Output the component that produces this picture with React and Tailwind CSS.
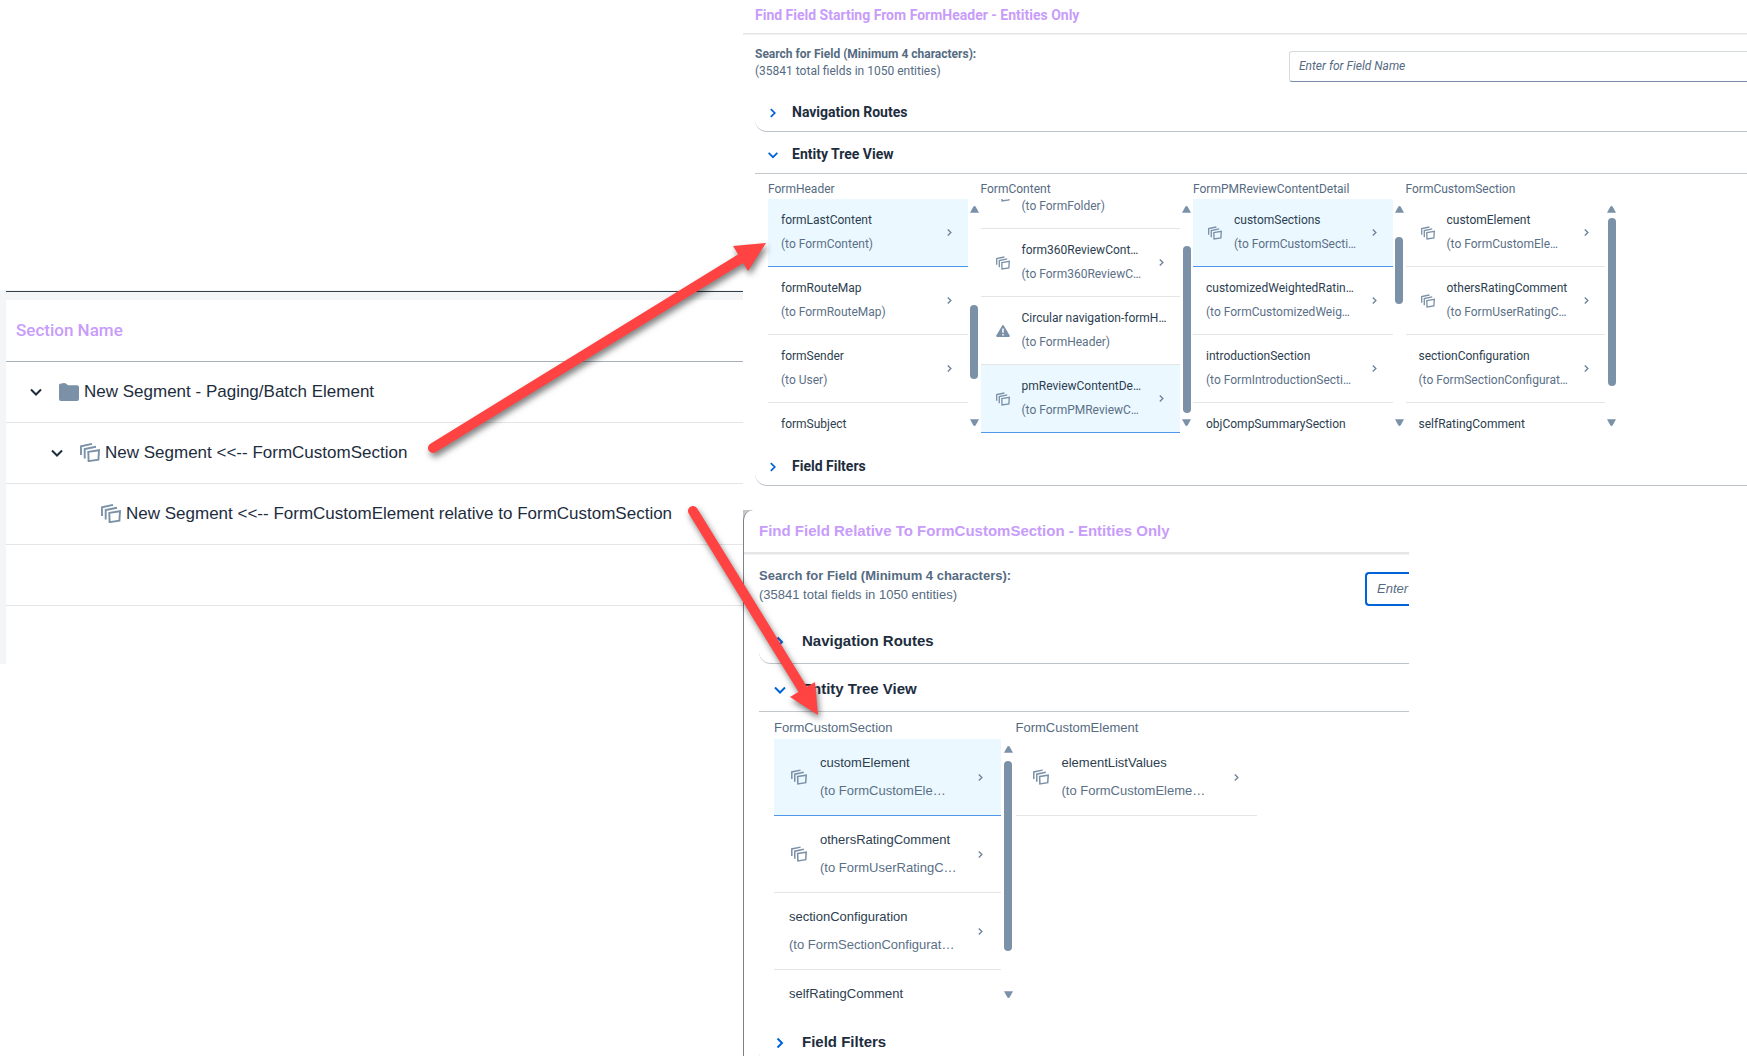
import React from "react";
import clsx from "clsx";

const segments = [
  { name: "New Segment - Paging/Batch Element", icon: "folder", level: 0, open: true },
  { name: "New Segment <<-- FormCustomSection", icon: "entity", level: 1, open: true },
  { name: "New Segment <<-- FormCustomElement relative to FormCustomSection", icon: "entity", level: 2 },
];

const levelPadding = ["pl-[22px]", "pl-[43px]", "pl-[95px]"];

const headerColumns = [
  {
    title: "FormHeader",
    thumb: { top: 106, height: 74 },
    items: [
      { name: "formLastContent", target: "(to FormContent)", selected: true, arrow: true },
      { name: "formRouteMap", target: "(to FormRouteMap)", arrow: true },
      { name: "formSender", target: "(to User)", arrow: true },
      { name: "formSubject", target: "" },
    ],
  },
  {
    title: "FormContent",
    scrolled: true,
    thumb: { top: 47, height: 167 },
    items: [
      { name: "", target: "(to FormFolder)", icon: "entity" },
      { name: "form360ReviewCont…", target: "(to Form360ReviewC…", icon: "entity", arrow: true },
      { name: "Circular navigation-formH…", target: "(to FormHeader)", icon: "warning" },
      { name: "pmReviewContentDe…", target: "(to FormPMReviewC…", icon: "entity", selected: true, arrow: true },
    ],
  },
  {
    title: "FormPMReviewContentDetail",
    thumb: { top: 38, height: 67 },
    items: [
      { name: "customSections", target: "(to FormCustomSecti…", icon: "entity", selected: true, arrow: true },
      { name: "customizedWeightedRatin…", target: "(to FormCustomizedWeig…", arrow: true },
      { name: "introductionSection", target: "(to FormIntroductionSecti…", arrow: true },
      { name: "objCompSummarySection", target: "" },
    ],
  },
  {
    title: "FormCustomSection",
    thumb: { top: 19, height: 168 },
    items: [
      { name: "customElement", target: "(to FormCustomEle…", icon: "entity", arrow: true },
      { name: "othersRatingComment", target: "(to FormUserRatingC…", icon: "entity", arrow: true },
      { name: "sectionConfiguration", target: "(to FormSectionConfigurat…", arrow: true },
      { name: "selfRatingComment", target: "" },
    ],
  },
];

const relativeColumns = [
  {
    title: "FormCustomSection",
    thumb: { top: 22, height: 190 },
    items: [
      { name: "customElement", target: "(to FormCustomEle…", icon: "entity", selected: true, arrow: true },
      { name: "othersRatingComment", target: "(to FormUserRatingC…", icon: "entity", arrow: true },
      { name: "sectionConfiguration", target: "(to FormSectionConfigurat…", arrow: true },
      { name: "selfRatingComment", target: "" },
    ],
  },
  {
    title: "FormCustomElement",
    items: [
      { name: "elementListValues", target: "(to FormCustomEleme…", icon: "entity", arrow: true },
    ],
  },
];

// the two dialogs share one layout at two zoom levels
const sizes = {
  small: {
    title: "h-[34px] pl-3 pb-[2px] text-[14px] border-b",
    search: "h-[56px] pl-3",
    label: "w-[534px] pt-3 text-[12px] leading-[17px]",
    input: "mt-[17px] h-[31px] pl-[9px] pb-[2px] text-[12px] rounded-l-[3px] border-[#d5dadd] border-b-[#758ca4]",
    body: "pl-3",
    header: "h-[42px] pl-[11px] gap-3 text-[14px]",
    headerIcon: "size-[14px]",
    columns: "w-[863px] grid-cols-4 pl-[13px]",
    columnTitle: "h-[25px] pt-[6px] text-[12px]",
    list: "h-[234px]",
    scrolled: "-mt-[38px]",
    item: "h-[68px] pl-[13px] pr-[13px]",
    iconBox: "w-7",
    icon: "size-[14px]",
    line: "h-6 leading-[22px] text-[12px]",
    scrollbar: "w-[13px]",
    filters: "mt-[11px]",
  },
  large: {
    title: "h-[44px] pl-[15px] text-[15px] border-b-2",
    search: "h-[62px] pl-[15px]",
    label: "w-[606px] pt-3 text-[13px] leading-[19px]",
    input: "mt-[18px] h-[34px] pl-[10px] pb-[2px] text-[13px] rounded-l-[4px] border-2 border-[#0064d9]",
    body: "pl-[15px]",
    header: "h-[48px] pl-[13px] gap-[14px] text-[15px]",
    headerIcon: "size-4",
    columns: "w-[498px] grid-cols-2 pl-[15px]",
    columnTitle: "h-[27px] pt-[6px] text-[13px]",
    list: "h-[266px]",
    scrolled: "",
    item: "h-[77px] pl-[15px] pr-[15px]",
    iconBox: "w-[31px]",
    icon: "size-4",
    line: "h-7 leading-7 text-[13px]",
    scrollbar: "w-[15px]",
    filters: "mt-3",
  },
};

function EntityIcon({ className }) {
  return (
    <svg viewBox="0 0 20 19" fill="none" stroke="#7b91a8" strokeWidth="1.9" className={className}>
      <path d="M1 12V3.2L12 .9" />
      <path d="M4.7 15.5V6L16 3.7" />
      <path d="M8.3 8.9 19 7.2 18.4 16.6 8.6 18.1Z" />
    </svg>
  );
}

function FolderIcon({ className }) {
  return (
    <svg viewBox="0 0 20 18" fill="#7b91a8" className={className}>
      <path d="M0 2Q0 1 1 .8L5 0Q6.500 0 7.500 1L9 2.200H18Q20 2.200 20 4V16Q20 18 18 18H2Q0 18 0 16Z" />
    </svg>
  );
}

function WarningIcon({ className }) {
  return (
    <svg viewBox="0 0 14 14" className={className}>
      <path d="M6.200 1.500Q7 .3 7.800 1.500L13.700 11.500Q14 13 12.800 13H1.200Q0 13 .3 11.500Z" fill="#7b91a8" />
      <path d="M7 4.500V8.700M7 9.900V11.400" stroke="#fff" strokeWidth="1.500" />
    </svg>
  );
}

function Chevron({ open, className }) {
  return (
    <svg viewBox="0 0 16 16" fill="none" stroke="currentColor" strokeWidth="2" className={className}>
      <path d={open ? "M3 5.500 8 10.500 13 5.500" : "M5.500 3.500 10 8 5.500 12.500"} />
    </svg>
  );
}

function Triangle({ down }) {
  return (
    <svg viewBox="0 0 9 7" fill="#7b91a8" className="w-[9px] h-[7px]">
      <path d={down ? "M0 .3H9L5.700 6.300Q4.500 7.500 3.300 6.300Z" : "M0 6.700H9L5.700 .7Q4.500-.5 3.300 .7Z"} />
    </svg>
  );
}

function TreeItem({ item, size }) {
  return (
    <li>
      <button
        className={clsx(
          "w-full flex items-center text-left border-b",
          size.item,
          item.selected ? "bg-[#ebf8ff] border-[#4f97e8]" : "border-[#e5e5e5]"
        )}
      >
        {item.icon && (
          <span className={clsx("shrink-0 pl-[2px]", size.iconBox)}>
            {item.icon === "warning" ? (
              <WarningIcon className={size.icon} />
            ) : (
              <EntityIcon className={size.icon} />
            )}
          </span>
        )}
        <span className="flex-1 min-w-0 whitespace-nowrap">
          <span className={clsx("block text-[#2c3e50]", size.line)}>{item.name}</span>
          <span className={clsx("block text-[#5b7087]", size.line)}>{item.target}</span>
        </span>
        {item.arrow && <Chevron className="size-[11px] shrink-0 text-[#6f859c]" />}
      </button>
    </li>
  );
}

function TreeColumn({ column, size }) {
  return (
    <div>
      <h3 className={clsx("text-[#556b82]", size.columnTitle)}>{column.title}</h3>
      <div className={clsx("flex overflow-hidden", size.list)}>
        <ul className={clsx("flex-1 min-w-0", column.scrolled && size.scrolled)}>
          {column.items.map((item) => (
            <TreeItem key={item.target + item.name} item={item} size={size} />
          ))}
        </ul>
        {column.thumb && (
          <div className={clsx("relative flex flex-col items-center justify-between py-[7px]", size.scrollbar)}>
            <Triangle />
            <span
              className="absolute inset-x-0 mx-auto w-2 rounded-full bg-[#7b91a8]"
              style={{ top: column.thumb.top, height: column.thumb.height }}
            />
            <Triangle down />
          </div>
        )}
      </div>
    </div>
  );
}

function SectionHeader({ title, open, size, className }) {
  return (
    <button
      aria-expanded={!!open}
      className={clsx(
        "w-full flex items-center pt-1 font-bold text-[#1d2d3e] border-b",
        size.header,
        open ? "border-[#c3c8cd]" : "rounded-bl-[12px] border-[#bcc3ca]",
        className
      )}
    >
      <Chevron open={open} className={clsx("text-[#0064d9]", size.headerIcon)} />
      {title}
    </button>
  );
}

function FindFieldPanel({ id, title, columns, size }) {
  return (
    <>
      <h2 className={clsx("flex items-center font-bold text-[#c89cfa] border-[#e4e5e6] shadow-2xs", size.title)}>
        {title}
      </h2>
      <div className={clsx("flex items-start text-[#556b82]", size.search)}>
        <label htmlFor={id} className={clsx("shrink-0", size.label)}>
          <span className="block font-bold">Search for Field (Minimum 4 characters):</span>
          <span className="block">(35841 total fields in 1050 entities)</span>
        </label>
        <input
          id={id}
          type="text"
          placeholder="Enter for Field Name"
          className={clsx(
            "flex-1 min-w-0 border border-r-0! bg-white placeholder:italic placeholder:text-[#556b82]",
            size.input
          )}
        />
      </div>
      <div className={size.body}>
        <SectionHeader title="Navigation Routes" size={size} />
        <SectionHeader title="Entity Tree View" open size={size} />
        <div className={clsx("grid", size.columns)}>
          {columns.map((column) => (
            <TreeColumn key={column.title} column={column} size={size} />
          ))}
        </div>
        <SectionHeader title="Field Filters" size={size} className={size.filters} />
      </div>
    </>
  );
}

function SegmentTable() {
  return (
    <div className="mt-[290px] h-[374px] bg-[#f4f5f7] pl-[6px] pt-px">
      <div className="h-full flex flex-col border-t border-[#2f3f4c] pt-2">
        <table className="w-full bg-white text-[17px] text-[#1d2d3e] border-collapse">
          <thead>
            <tr className="h-[61px] border-b border-[#a5b0bb]">
              <th className="pl-[10px] text-left font-[Roboto] font-medium text-[#c89cfa]">Section Name</th>
            </tr>
          </thead>
          <tbody>
            {segments.map((segment) => (
              <tr key={segment.name} className="h-[61px] border-b border-[#e5e5e5]">
                <td className={levelPadding[segment.level]}>
                  <div className="flex items-center">
                    {segment.open && (
                      <button aria-label="Collapse" className="mr-[15px]">
                        <Chevron open className="size-4" />
                      </button>
                    )}
                    {segment.icon === "folder" ? (
                      <FolderIcon className="w-5 h-[18px] mr-[5px]" />
                    ) : (
                      <EntityIcon className="w-5 h-[19px] mr-[5px]" />
                    )}
                    <span className="whitespace-nowrap">{segment.name}</span>
                  </div>
                </td>
              </tr>
            ))}
            <tr className="h-[61px] border-b border-[#e5e5e5]">
              <td></td>
            </tr>
          </tbody>
        </table>
        <div className="flex-1 bg-white"></div>
      </div>
    </div>
  );
}

// red callout arrows from the segments to the dialogs
function Callouts() {
  return (
    <svg
      width="1747"
      height="1056"
      fill="#ff4343"
      stroke="#ff4343"
      className="absolute top-0 left-0 pointer-events-none drop-shadow-[2px_4px_3px_rgba(0,0,0,0.5)]"
    >
      <path d="M433 448 745 256" strokeWidth="10" strokeLinecap="round" />
      <path d="M766 243 733 246 748 271Z" stroke="none" />
      <path d="M693 511 805 693" strokeWidth="10" strokeLinecap="round" />
      <path d="M818 715 790 697 815 682Z" stroke="none" />
    </svg>
  );
}

export default function App() {
  return (
    <main className="relative h-screen overflow-hidden flex bg-white font-['Liberation_Sans',Arial,sans-serif]">
      <section className="w-[743px] shrink-0">
        <SegmentTable />
      </section>
      <div className="flex-1 min-w-0">
        <section className="font-[Roboto,'Liberation_Sans',sans-serif]">
          <FindFieldPanel id="find-header" title="Find Field Starting From FormHeader - Entities Only" columns={headerColumns} size={sizes.small} />
        </section>
        <section className="mt-6 w-[666px] bg-[#c4c6c9]">
          <div className="overflow-hidden bg-white border-l border-[#7d8287] rounded-tl-[10px]">
            <FindFieldPanel id="find-relative" title="Find Field Relative To FormCustomSection - Entities Only" columns={relativeColumns} size={sizes.large} />
          </div>
        </section>
      </div>
      <Callouts />
    </main>
  );
}
